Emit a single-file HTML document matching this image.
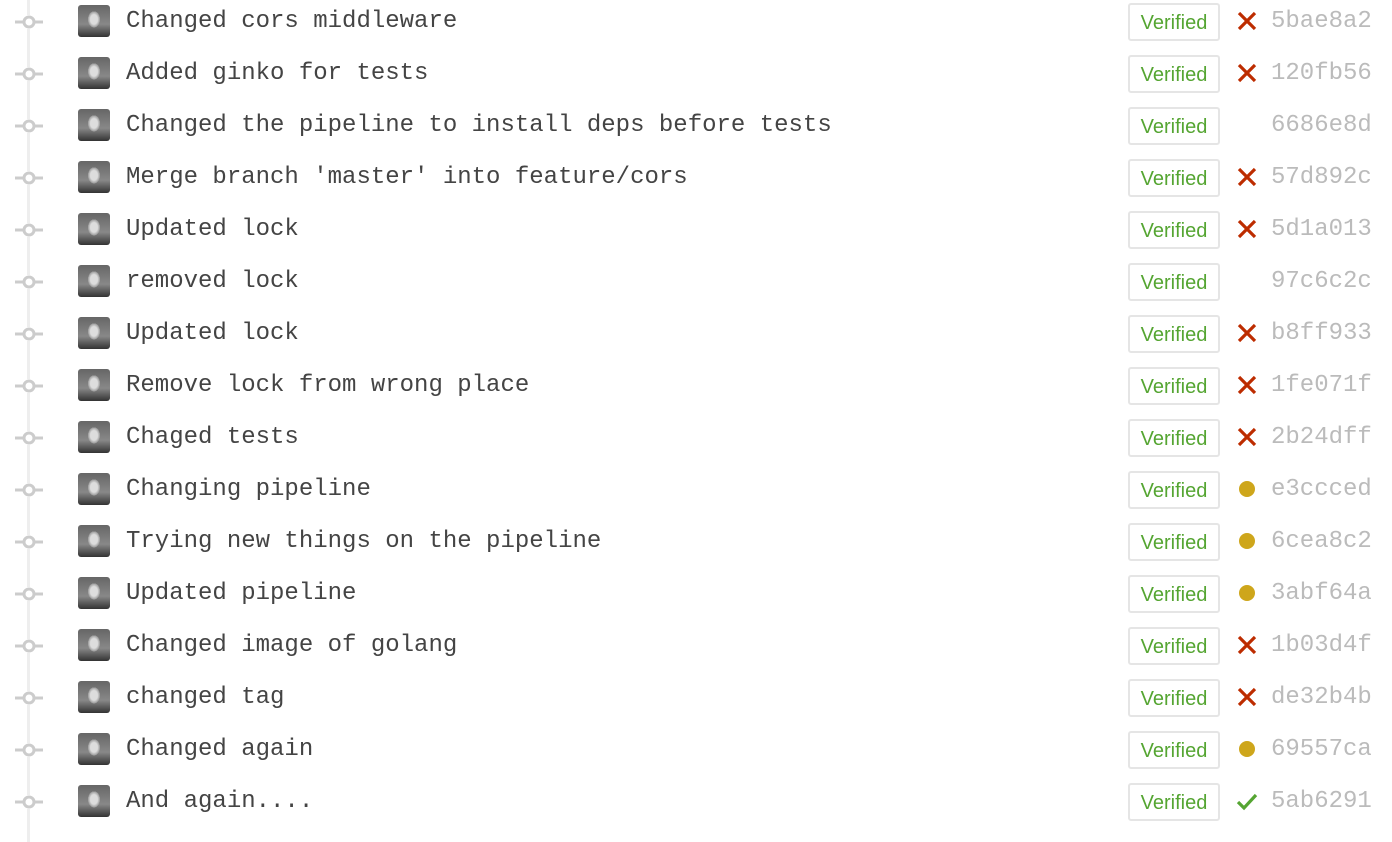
<!DOCTYPE html>
<html><head><meta charset="utf-8"><style>
body{margin:0;width:1392px;height:842px;background:#fff;overflow:hidden;position:relative;font-family:"Liberation Sans",sans-serif}
.line{position:absolute;left:27px;top:0;width:3px;height:842px;background:#eee}
.row{position:absolute;left:0;width:1392px;height:52px}
.node{position:absolute;left:14px;top:15px}
.av{position:absolute;left:78px;top:5px;width:32px;height:32px;border-radius:3px;background:radial-gradient(ellipse 6px 8px at 50% 45%,#ddd 0 60%,#999 100%,transparent 101%),linear-gradient(#666,#888 60%,#333)}
.msg{position:absolute;left:126px;top:6px;font:24px/32px "Liberation Mono",monospace;color:#444;white-space:pre}
.ver{position:absolute;left:1128px;top:3px;width:88px;height:34px;border:2px solid #e5e5e5;border-radius:3px;color:#55a532;font-size:20px;line-height:36px;text-align:center}
.st{position:absolute;left:1236px;top:10px;width:22px;height:22px}
.hash{position:absolute;left:1271px;top:6px;font:24px/32px "Liberation Mono",monospace;color:#bbb}
</style></head><body>
<div class="line"></div>
<div id="c"></div>
<script>
const d=[["Changed cors middleware","x","5bae8a2"],["Added ginko for tests","x","120fb56"],["Changed the pipeline to install deps before tests","","6686e8d"],["Merge branch 'master' into feature/cors","x","57d892c"],["Updated lock","x","5d1a013"],["removed lock","","97c6c2c"],["Updated lock","x","b8ff933"],["Remove lock from wrong place","x","1fe071f"],["Chaged tests","x","2b24dff"],["Changing pipeline","o","e3ccced"],["Trying new things on the pipeline","o","6cea8c2"],["Updated pipeline","o","3abf64a"],["Changed image of golang","x","1b03d4f"],["changed tag","x","de32b4b"],["Changed again","o","69557ca"],["And again....","v","5ab6291"]];
const ic={x:'<svg class="st" viewBox="0 0 22 22"><path d="M3 3L19 19M19 3L3 19" stroke="#bd2c00" stroke-width="3.2"/></svg>',o:'<svg class="st" viewBox="0 0 22 22"><circle cx="11" cy="11" r="8" fill="#cea61b"/></svg>',v:'<svg class="st" viewBox="0 0 22 22"><path d="M2 12L8 18L20 5" stroke="#55a532" stroke-width="3.2" fill="none"/></svg>',"":""};
let h="";d.forEach((r,i)=>{h+=`<div class="row" style="top:${i*52}px"><svg class="node" width="30" height="14" viewBox="0 0 30 14"><rect x="0" y="0" width="30" height="14" fill="#fff"/><path d="M1 7H9M21 7H29" stroke="#ccc" stroke-width="3"/><circle cx="15" cy="7" r="5" fill="#fff" stroke="#ccc" stroke-width="3"/></svg><div class="av"></div><div class="msg">${r[0]}</div><div class="ver">Verified</div>${ic[r[1]]}<div class="hash">${r[2]}</div></div>`});
document.getElementById("c").innerHTML=h;
</script>
</body></html>
